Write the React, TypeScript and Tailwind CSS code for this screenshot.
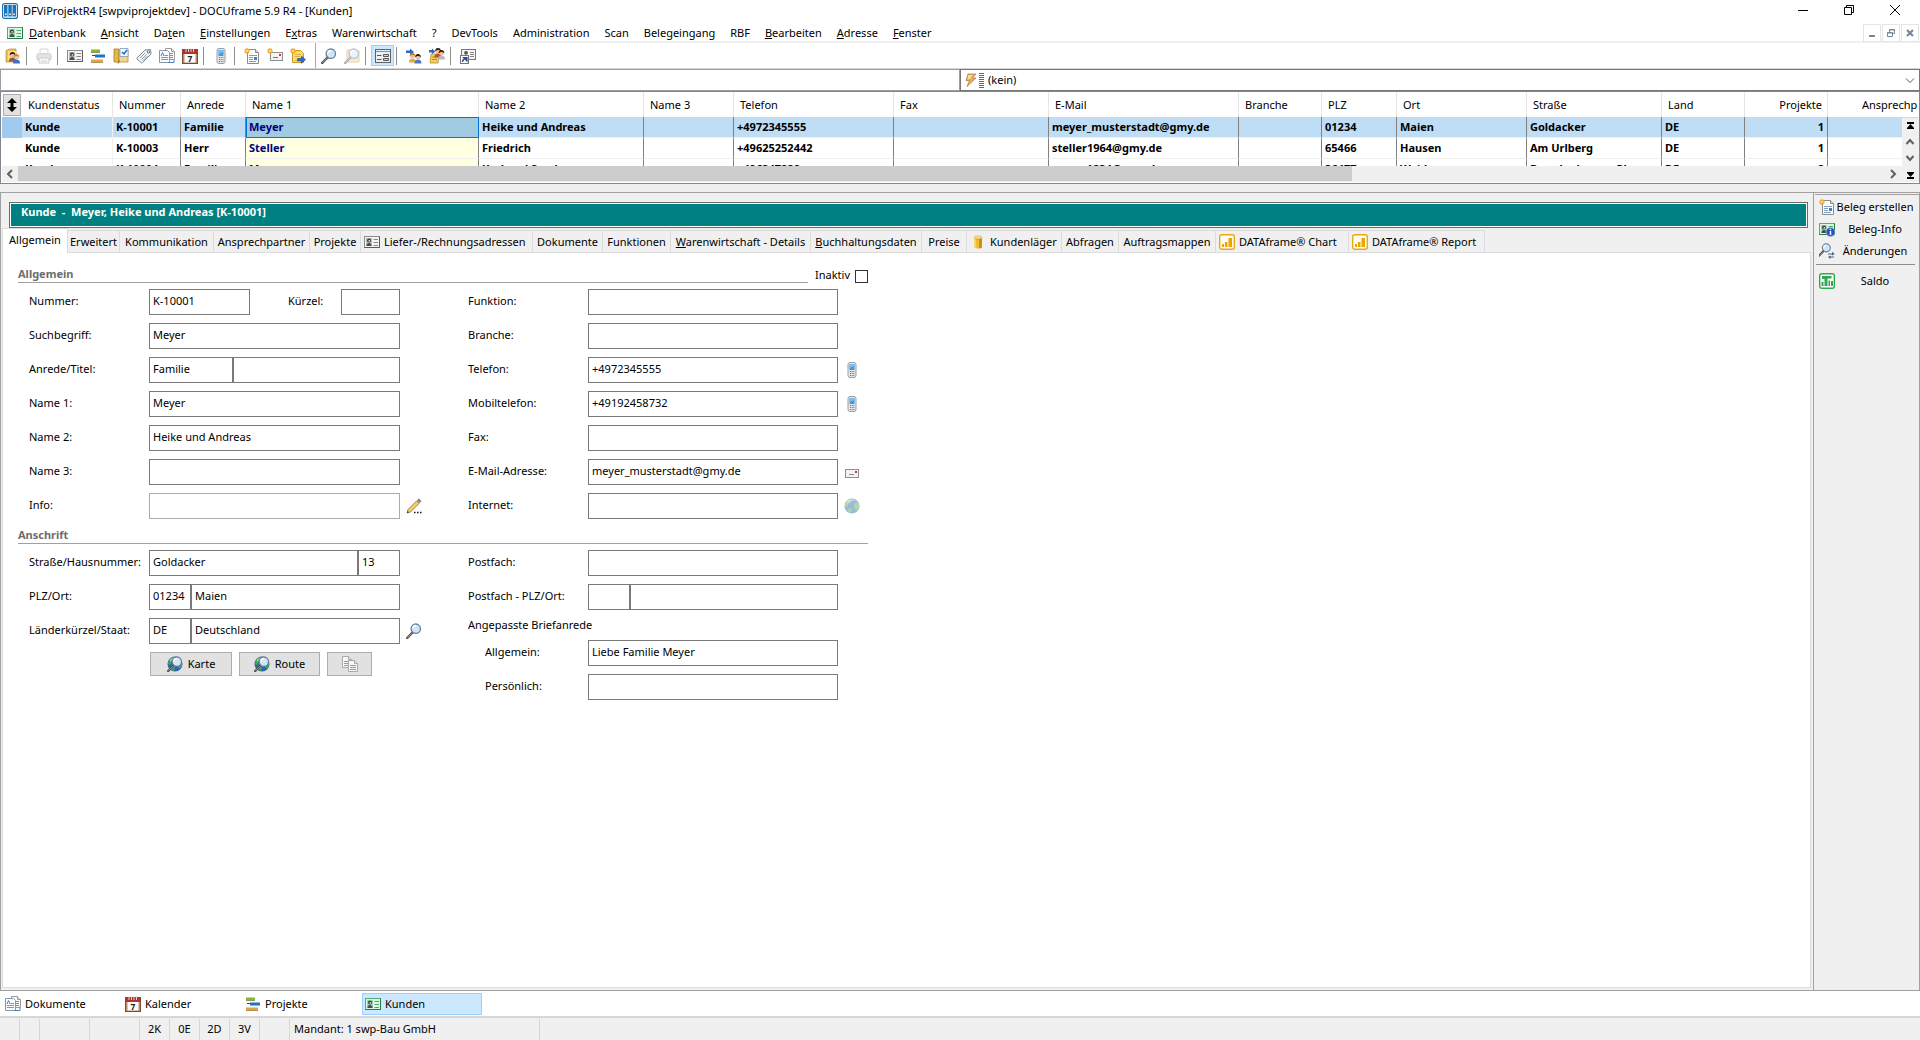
import React from 'react';

const Person = ({ x, y, hair, body }: { x: number; y: number; hair: string; body: string }) => (
  <g transform={`translate(${x} ${y})`}>
    <path d="M0 9.5C0 6.5 1.5 5.5 3.5 5.5S7 6.5 7 9.5z" fill={body} />
    <circle cx="3.5" cy="3.2" r="2.4" fill="#f0bf94" />
    <path d="M.8 3.6C.3 1 2-.2 3.8 0c2 .2 2.9 1.7 2.4 3.6C5.5 2.4 4.5 2 3.5 2S1.3 2.5.8 3.6z" fill={hair} />
  </g>
);

const Star = () => (
  <g stroke="#f5a623" strokeWidth="1.2">
    <path d="M3 0v6M0 3h6M1 1l4 4M5 1L1 5" />
    <circle cx="3" cy="3" r="1" fill="#ffe9a0" stroke="none" />
  </g>
);

const Card = ({ green }: { green?: boolean }) => (
  <>
    <rect x=".5" y="2.5" width="15" height="11" fill={green ? '#dff5e6' : '#f4f4f4'} stroke={green ? '#4fae73' : '#8c8c8c'} />
    <path d="M.5 13.5h15v-11" fill="none" stroke={green ? '#1f7c46' : '#5a5a5a'} />
    <rect x="2" y="4" width="6" height="8" fill={green ? '#9ad7b0' : '#bdbdbd'} />
    <circle cx="5" cy="6.5" r="2" fill="#3a3a3a" />
    <circle cx="5.3" cy="6.8" r=".9" fill="#e8e8e8" />
    <path d="M2.5 12c0-2 1-3 2.500-3s2.500 1 2.500 3z" fill="#4a4a4a" />
    <path d="M9.500 5.500h4.500M9.500 8.500h4.500M9.500 11.500h4.500" stroke={green ? '#49a96d' : '#8a8a8a'} />
  </>
);

const Lens = () => (
  <>
    <path d="M6.5 9.5L1.2 15" stroke="#4c4c4c" strokeWidth="2.4" strokeLinecap="round" />
    <path d="M6 10.2L1.5 14.7" stroke="#b5b5b5" strokeWidth=".8" />
    <circle cx="9.8" cy="5.7" r="4.7" fill="#cfe6fa" stroke="#6d7f93" strokeWidth="1.3" />
    <path d="M7 5.5c0-2 1.5-3 3-3" fill="none" stroke="#fff" strokeWidth="1.4" />
  </>
);

const Globe = () => (
  <>
    <circle cx="8" cy="8" r="7.5" fill="#2f62b5" />
    <path d="M2 4c2-3 5-3 6-2.500L7 4 4.500 6 3 9 1 8zM10 6l3-2 2.200 3-.7 4-2 1.500L10 10zM5 10l3 1-1 4c-2-.5-3-2-3-3z" fill="#3fae49" />
    <path d="M3 3.500C5 1 9 .8 12 2.500 9 2 5 3 3 6z" fill="#b7dcf7" opacity=".7" />
  </>
);

const Page = ({ x, y }: { x: number; y: number }) => (
  <g transform={`translate(${x} ${y})`}>
    <path d="M.5.5h6l3 3v8h-9z" fill="#fdfdfd" stroke="#9a9a9a" />
    <path d="M6.5.5v3h3" fill="#e5e5e5" stroke="#9a9a9a" />
    <path d="M2 5.5h6M2 7.5h6M2 9.5h6" stroke="#5b93c9" />
  </g>
);

const Bars = () => (
  <>
    <rect x=".7" y=".7" width="14.6" height="14.6" rx="2" fill="#fffdf5" stroke="#e8ab0c" strokeWidth="1.4" />
    <path d="M3 13h2V10H3zM6 13h2.500V8H6zM9.500 13H13V4H9.500z" fill="#e8a800" />
  </>
);

const ICONS: Record<string, React.ReactNode> = {
  app: (
    <>
      <rect x=".6" y=".6" width="14.8" height="14.8" rx="2" fill="#fff" stroke="#1c6fae" strokeWidth="1.2" />
      <path d="M2 2h3.500v11.500H2zM6.300 2h3.500v11.500H6.300zM10.500 2H14v11.500h-3.500z" fill="#1c74b8" />
      <path d="M3 10.500h1.500V12H3zM7.300 10.500h1.500V12H7.300zM11.500 10.500H13V12h-1.500z" fill="#fff" />
    </>
  ),
  card: <Card />,
  cardGreen: <Card green />,
  folderUser: (
    <>
      <path d="M1 2.500L5 1h6v11l-3 2H1z" fill="#eebf52" stroke="#b88a28" strokeWidth=".7" />
      <path d="M3 3h8v9H3z" fill="#f7dc8c" />
      <Person x={4} y={4} hair="#2c1d14" body="#8c5a3c" />
      <Person x={8} y={6} hair="#c98a3a" body="#3a6fd0" />
    </>
  ),
  printer: (
    <g opacity=".55">
      <path d="M4 1h8v5H4z" fill="#fafafa" stroke="#b5b5b5" />
      <rect x="1" y="6" width="14" height="6" rx="1" fill="#cfcfcf" stroke="#a5a5a5" />
      <path d="M3 10h10v5H3z" fill="#f2f2f2" stroke="#a5a5a5" />
      <path d="M5 13h6" stroke="#b5b5b5" />
    </g>
  ),
  gantt: (
    <>
      <path d="M1 1.500h9v3H1z" fill="#8db52c" />
      <path d="M5 6.500h10v3H5z" fill="#1d74c4" />
      <path d="M2 7.500h3" stroke="#444" />
      <path d="M1 11.500h12v3H1z" fill="#e6a33c" />
      <path d="M1 4.500h9M1 14.500h12" stroke="#6a6a3a" strokeWidth=".6" />
    </>
  ),
  planner: (
    <>
      <path d="M1 1h5v13H1z" fill="#e7b64b" stroke="#a97c22" strokeWidth=".8" />
      <path d="M6 2h9v12H6z" fill="#f3d68b" stroke="#b08a35" strokeWidth=".8" />
      <path d="M7 .5h8v8H7z" fill="#f4f9ff" stroke="#7a9cc4" strokeWidth=".8" />
      <path d="M9 4l2 2 3-4" fill="none" stroke="#1b62b8" strokeWidth="1.3" />
      <path d="M5 15.500l1.500-3" stroke="#8a6a2a" />
    </>
  ),
  tag: (
    <>
      <path d="M1 10L9 2l5.500-.5L15 6l-8.500 8.500c-.5.5-1 .5-1.500 0L1 11z" fill="#f3f5f7" stroke="#7d8790" />
      <circle cx="12.500" cy="4" r="1.2" fill="#fff" stroke="#66717c" />
      <path d="M4 10l5-5M5.500 11.500l5-5M7 12.500l4.500-4.500" stroke="#8fa0b3" />
    </>
  ),
  docs: (
    <>
      <Page x={6} y={0} />
      <path d="M.5 2.500h8l2 2v10H.5z" fill="#fafcff" stroke="#8d96a3" />
      <path d="M2 9.500h7M2 11.500h7M5.500 7.500H9" stroke="#6f9bd1" />
      <path d="M2 8l1.500-3.500L5 8M9 14.500h6v-3" fill="none" stroke="#4d7fc0" />
    </>
  ),
  calendar: (
    <>
      <rect x=".5" y="1.500" width="15" height="14" fill="#b98c6a" stroke="#7d4a32" />
      <path d="M1 2h14v4H1z" fill="#b5322c" />
      <path d="M4 0v4M6.500 0v4M9 0v4M11.500 0v4" stroke="#e3e3e3" strokeWidth=".9" />
      <path d="M2.500 6h11v8.500h-11z" fill="#fff" />
      <text x="8" y="13.500" textAnchor="middle" fontSize="8.5" fontWeight="700" fill="#222">7</text>
    </>
  ),
  phone: (
    <>
      <rect x="4" y=".5" width="8" height="15" rx="2" fill="#e4e6e8" stroke="#9a9fa5" />
      <rect x="5.500" y="2" width="5" height="6" fill="#3f9be0" />
      <path d="M5.500 2h5v2l-5 2z" fill="#79bef2" />
      <path d="M6 9.500h4.500M6 11.500h4.500M6 13.500h4.500" stroke="#6c7278" strokeDasharray="1 .7" />
    </>
  ),
  newDoc: (
    <>
      <path d="M3.500 1.500h8l3 3v11h-11z" fill="#fdfdfd" stroke="#8a8a8a" />
      <path d="M11.500 1.500v3h3" fill="#ddd" stroke="#8a8a8a" />
      <path d="M5 7.500h8M5 9.500h4M5 11.500h4M5 13.500h7" stroke="#7c9fc4" />
      <rect x="10" y="9" width="3" height="3" fill="#3d80c4" />
      <Star />
    </>
  ),
  newMail: (
    <>
      <rect x="3.500" y="4.500" width="12" height="8" fill="#f4f4f4" stroke="#8e8e8e" />
      <rect x="12" y="6" width="2" height="2" fill="#d8322c" />
      <path d="M6 9.500h5" stroke="#777" />
      <Star />
    </>
  ),
  newNote: (
    <>
      <path d="M2.500 2.500h8l3 3v9h-11z" fill="#f8dd6c" stroke="#c79d24" />
      <path d="M5 6.500h6M5 8.500h5M5 12.500h4" stroke="#d8b544" />
      <path d="M7.500 10.500h4V8l4 3.700-4 3.500V13h-4z" fill="#3468cf" stroke="#1d479f" strokeWidth=".6" />
      <Star />
    </>
  ),
  lens: <Lens />,
  lensFolder: (
    <g opacity=".45">
      <path d="M3 2h5l1 1h6v11H3z" fill="#f2d48e" stroke="#c9a557" />
      <Lens />
    </g>
  ),
  form: (
    <>
      <rect x=".5" y="1.500" width="15" height="13" fill="#eceff2" stroke="#5f6468" />
      <path d="M1 3.500h14" stroke="#8b9095" />
      <path d="M2 7.500h4.500M2 11.500h4.500" stroke="#555" strokeWidth="1.2" />
      <path d="M8.500 6.500h5v2h-5zM8.500 10.500h5v2h-5z" fill="#f7d773" stroke="#55595c" />
    </>
  ),
  arrowUsers: (
    <>
      <path d="M0 2.500h4V.5l4 3.500-4 3V5H0z" fill="#2f66c8" />
      <Person x={3} y={5} hair="#b98232" body="#e2a93f" />
      <Person x={8.5} y={6} hair="#2b1c12" body="#4a79c9" />
    </>
  ),
  arrowDocUsers: (
    <>
      <path d="M2 6h8l-1 9H1z" fill="#f2cf62" stroke="#b58e26" strokeWidth=".8" />
      <path d="M3 9h5M3 11.500h5" stroke="#a87f22" strokeWidth=".8" />
      <path d="M0 2h3V.5l3.500 3L3 6V4.500H0z" fill="#2f66c8" />
      <Person x={5.5} y={0} hair="#3b2413" body="#b5542e" />
      <Person x={9} y={2} hair="#2b1c12" body="#b8b8c6" />
    </>
  ),
  shortcut: (
    <>
      <rect x="1.500" y="1.500" width="14" height="10" fill="#f4f4f4" stroke="#777" />
      <circle cx="6" cy="4.800" r="1.9" fill="#555" />
      <path d="M10 4.500h4M10 6.500h4M10 8.500h4" stroke="#888" />
      <rect x=".5" y="7.500" width="8" height="8" fill="#fff" stroke="#777" />
      <path d="M2.500 14c0-2 .8-3 2.500-3M3.500 9.500h3.500V13z" fill="#1c4f9e" stroke="#1c4f9e" strokeWidth="1.2" />
    </>
  ),
  bolt: (
    <>
      <path d="M5 2h8l-3.500 4H13L4 14.500l2.500-6H3z" fill="#e9b06a" stroke="#a8733f" strokeWidth=".7" />
      <path d="M5.500 3h4l-3 4h-2z" fill="#ffe08a" />
    </>
  ),
  pencil: (
    <>
      <path d="M1 15l1-3.500L10.500 3 13 5.500 4.500 14z" fill="#f3cf6a" stroke="#8f6d2c" strokeWidth=".8" />
      <path d="M10.500 3l1.500-1.500 2.500 2.500L13 5.500z" fill="#7da391" />
      <path d="M12 1.500c1-1.200 3.500 1 2.500 2.500z" fill="#d4545a" stroke="#a3393f" strokeWidth=".5" />
      <path d="M1 15l.7-2 1.300 1.300z" fill="#222" />
      <path d="M8 14.500h1.500M11 14.500h1.500M14 14.500h1.500" stroke="#111" strokeWidth="1.5" />
    </>
  ),
  mail: (
    <>
      <rect x="1.500" y="5.500" width="13" height="8" fill="#f2f2f2" stroke="#8f8f8f" />
      <rect x="11" y="7" width="2" height="2" fill="#d8322c" />
      <path d="M5 10.500h5" stroke="#888" />
    </>
  ),
  globe: <g opacity=".45"><Globe /></g>,
  globeLens: (
    <>
      <Globe />
      <Lens />
    </>
  ),
  copy: (
    <g opacity=".8">
      <Page x={0} y={0} />
      <Page x={6} y={4} />
    </g>
  ),
  cylinder: (
    <>
      <path d="M4 3.500v9c0 2.500 8 2.500 8 0v-9z" fill="#f0bb2c" />
      <path d="M9 3v11.500c2 0 3-.8 3-2V3z" fill="#c98e12" />
      <path d="M5 4v9.500" stroke="#fff0b5" />
      <ellipse cx="8" cy="3.500" rx="4" ry="1.5" fill="#fbe08a" stroke="#c08f20" strokeWidth=".5" />
    </>
  ),
  bars: <Bars />,
  cardInfo: (
    <>
      <Card green />
      <circle cx="11.500" cy="11" r="4.5" fill="#2855b8" stroke="#b8c6e8" strokeWidth=".6" />
      <path d="M11.500 10v4M11.500 7.800v1.200" stroke="#fff" strokeWidth="1.5" />
    </>
  ),
  lensSync: (
    <>
      <g transform="translate(-1 0) scale(.85)"><Lens /></g>
      <path d="M9 11h5M15 14h-5" stroke="#45658a" strokeWidth="1.2" />
      <path d="M13 8.800l2.800 2.200-2.800 1.500zM11.500 12.500L9 14l2.500 2z" fill="#45658a" />
    </>
  ),
  saldo: (
    <>
      <rect x=".7" y=".7" width="14.6" height="14.6" rx="2" fill="#fff" stroke="#2fa84f" strokeWidth="1.4" />
      <path d="M2.500 13v-4h2v4zM5.500 13V6H3V3h9.500v2.500H8.500V13zM9.500 13V7.500h1.500V13zM12 13V8h2v5z" fill="#2fa84f" />
    </>
  ),
};

const Icon = ({ name }: { name: string }) => (
  <svg viewBox="0 0 16 16" className="w-4 h-4 shrink-0" aria-hidden="true">
    {ICONS[name]}
  </svg>
);

const menu = [
  ['D', 'atenbank'],
  ['A', 'nsicht'],
  ['', 'Daten', 't'],
  ['E', 'instellungen'],
  ['', 'Extras', 'x'],
  ['', 'Warenwirtschaft'],
  ['', '?'],
  ['', 'DevTools'],
  ['', 'Administration'],
  ['', 'Scan'],
  ['', 'Belegeingang'],
  ['', 'RBF'],
  ['B', 'earbeiten'],
  ['A', 'dresse'],
  ['F', 'enster'],
];

const toolbar = [
  'folderUser', '|', 'printer', '|', 'card', 'gantt', 'planner', 'tag', 'docs', 'calendar', '|', 'phone', '|',
  'newDoc', 'newMail', 'newNote', '||', 'lens', 'lensFolder', '|', 'form', '|', 'arrowUsers', 'arrowDocUsers', '|', 'shortcut',
];

const columns = [
  { title: 'Kundenstatus', width: 'w-[91px]' },
  { title: 'Nummer', width: 'w-[68px]' },
  { title: 'Anrede', width: 'w-[65px]' },
  { title: 'Name 1', width: 'w-[233px]' },
  { title: 'Name 2', width: 'w-[165px]' },
  { title: 'Name 3', width: 'w-[90px]' },
  { title: 'Telefon', width: 'w-[160px]' },
  { title: 'Fax', width: 'w-[155px]' },
  { title: 'E-Mail', width: 'w-[190px]' },
  { title: 'Branche', width: 'w-[83px]' },
  { title: 'PLZ', width: 'w-[75px]' },
  { title: 'Ort', width: 'w-[130px]' },
  { title: 'Straße', width: 'w-[135px]' },
  { title: 'Land', width: 'w-[83px]' },
  { title: 'Projekte', width: 'w-[83px]' },
];

const customers = [
  ['Kunde', 'K-10001', 'Familie', 'Meyer', 'Heike und Andreas', '', '+4972345555', '', 'meyer_musterstadt@gmy.de', '', '01234', 'Maien', 'Goldacker', 'DE', '1'],
  ['Kunde', 'K-10003', 'Herr', 'Steller', 'Friedrich', '', '+49625252442', '', 'steller1964@gmy.de', '', '65466', 'Hausen', 'Am Urlberg', 'DE', '1'],
  ['Kunde', 'K-10004', 'Familie', 'Moser', 'Karl und Sandra', '', '+496347828', '', 'moser1234@gmy.de', '', '36477', 'Weiden', 'Brandenburger Pl.', 'DE', '2'],
];

const tabs = [
  { label: 'Erweitert', width: 'w-[52px]' },
  { label: 'Kommunikation', width: 'w-[94px]' },
  { label: 'Ansprechpartner', width: 'w-[96px]' },
  { label: 'Projekte', width: 'w-[51px]' },
  { label: 'Liefer-/Rechnungsadressen', width: 'w-[172px]', icon: 'card' },
  { label: 'Dokumente', width: 'w-[70px]' },
  { label: 'Funktionen', width: 'w-[68px]' },
  { label: 'arenwirtschaft - Details', key: 'W', width: 'w-[140px]' },
  { label: 'uchhaltungsdaten', key: 'B', width: 'w-[111px]' },
  { label: 'Preise', width: 'w-[45px]' },
  { label: 'Kundenläger', width: 'w-[95px]', icon: 'cylinder' },
  { label: 'Abfragen', width: 'w-[57px]' },
  { label: 'Auftragsmappen', width: 'w-[97px]' },
  { label: 'DATAframe® Chart', width: 'w-[133px]', icon: 'bars' },
  { label: 'DATAframe® Report', width: 'w-[136px]', icon: 'bars' },
];

const windows = [
  { label: 'Dokumente', icon: 'docs' },
  { label: 'Kalender', icon: 'calendar' },
  { label: 'Projekte', icon: 'gantt' },
  { label: 'Kunden', icon: 'cardGreen', active: true },
];

const status = [
  { text: '', width: 'w-5' },
  { text: '', width: 'w-5' },
  { text: '', width: 'w-[50px]' },
  { text: '', width: 'w-[50px]' },
  { text: '2K', width: 'w-[30px] text-center' },
  { text: '0E', width: 'w-[30px] text-center' },
  { text: '2D', width: 'w-[30px] text-center' },
  { text: '3V', width: 'w-[30px] text-center' },
  { text: '', width: 'w-[30px]' },
  { text: 'Mandant: 1 swp-Bau GmbH', width: 'w-[250px] pl-1' },
];

type Part = { value?: string; width: string; name?: string };

const Row = ({ label, id, parts, icon, iconLabel, light, indent, children }: {
  label: string;
  id: string;
  parts: Part[];
  icon?: string;
  iconLabel?: string;
  light?: boolean;
  indent?: boolean;
  children?: React.ReactNode;
}) => (
  <div className="flex items-center h-[26px]">
    <label htmlFor={`${id}-0`} className={`w-[120px] shrink-0 pb-[3px] whitespace-nowrap ${indent ? 'pl-[17px]' : ''}`}>
      {label}
    </label>
    {parts.map((p, i) => (
      <input
        key={i}
        id={`${id}-${i}`}
        aria-label={p.name}
        defaultValue={p.value}
        className={`h-[26px] border bg-white pl-[3px] pb-[3px] outline-none ${light ? 'border-[#ababab]' : 'border-[#7a7a7a]'} ${p.width}`}
      />
    ))}
    {children}
    {icon && (
      <button type="button" className="ml-[6px]" aria-label={iconLabel}>
        <Icon name={icon} />
      </button>
    )}
  </div>
);

const Chevron = ({ d }: { d: string }) => (
  <svg viewBox="0 0 16 16" className="w-4 h-4" aria-hidden="true">
    <path d={d} fill="none" stroke="#606060" strokeWidth="2" />
  </svg>
);

const TitleBar = () => (
  <header className="flex items-start h-6 px-[2px]">
    <div className="flex items-center gap-[5px] h-6 pb-[2px]">
      <Icon name="app" />
      <h1>DFViProjektR4 [swpviprojektdev] - DOCUframe 5.9 R4 - [Kunden]</h1>
    </div>
    <div className="flex ml-auto text-black">
      <button className="flex justify-center w-[46px] pt-[2px]" aria-label="Minimieren">
        <svg viewBox="0 0 16 16" className="w-4 h-4"><path d="M3 8.500h10" stroke="currentColor" /></svg>
      </button>
      <button className="flex justify-center w-[46px] pt-[2px]" aria-label="Wiederherstellen">
        <svg viewBox="0 0 16 16" className="w-4 h-4"><path d="M3.500 5.500h7v7h-7zM5.500 5.500v-2h7v7h-2" fill="none" stroke="currentColor" /></svg>
      </button>
      <button className="flex justify-center w-[46px] pt-[2px]" aria-label="Schließen">
        <svg viewBox="0 0 16 16" className="w-4 h-4"><path d="M3 3l10 10M13 3L3 13" stroke="currentColor" /></svg>
      </button>
    </div>
  </header>
);

const MenuBar = () => (
  <nav className="flex items-center h-[19px] border-b-2 border-[#f0f0f0] pl-[7px] pr-px">
    <Icon name="cardGreen" />
    <div className="flex gap-[15px] ml-[6px]">
      {menu.map(([key, text, inner]) => (
        <button key={key + text}>
          {key && <u>{key}</u>}
          {inner ? (
            <>
              {text.split(inner)[0]}
              <u>{inner}</u>
              {text.split(inner)[1]}
            </>
          ) : (
            text
          )}
        </button>
      ))}
    </div>
    <div className="flex gap-px ml-auto text-[#78879a]">
      <button className="w-[18px] h-[18px] border border-[#e5e5e5]" aria-label="Fenster minimieren">
        <svg viewBox="0 0 16 16"><path d="M5 11h6" stroke="currentColor" strokeWidth="2" /></svg>
      </button>
      <button className="w-[18px] h-[18px] border border-[#e5e5e5]" aria-label="Fenster wiederherstellen">
        <svg viewBox="0 0 16 16"><path d="M4.500 7.500h5v4h-5zM4 8h6M6.500 7V4.500h5v4H10M6 5h6" fill="none" stroke="currentColor" /></svg>
      </button>
      <button className="w-[18px] h-[18px] border border-[#e5e5e5]" aria-label="Fenster schließen">
        <svg viewBox="0 0 16 16"><path d="M5 5l6 6M11 5l-6 6" stroke="currentColor" strokeWidth="2.2" /></svg>
      </button>
    </div>
  </nav>
);

const Toolbar = () => (
  <div className="flex items-center h-[26px] border-b border-[#d5d5d5] pl-px">
    {toolbar.map((name, i) => {
      if (name === '|') return <span key={i} className="w-2 h-[18px] pl-[2px]"><span className="block w-px h-full bg-[#8c8c8c]" /></span>;
      if (name === '||') return <span key={i} className="w-2 h-full pl-[6px]"><span className="block w-px h-full bg-[#a8a8a8]" /></span>;
      return (
        <button
          key={i}
          aria-label={name}
          className={`flex items-center justify-center w-[23px] h-[21px] ${name === 'form' ? 'bg-[#cce8ff] border border-[#99d1ff]' : ''}`}
        >
          <Icon name={name} />
        </button>
      );
    })}
  </div>
);

const SearchRow = () => (
  <div className="flex h-[22px]">
    <input aria-label="Suche" className="w-1/2 border border-[#9a9da3] outline-none px-1" />
    <div className="relative flex w-1/2 items-center border border-[#777] pl-[2px]">
      <Icon name="bolt" />
      <svg viewBox="0 0 5 16" className="w-[5px] h-4" aria-hidden="true">
        <path d="M0 1.500h5M0 3.500h5M0 5.500h5M0 7.500h5M0 9.500h5M0 11.500h5M0 13.500h5M0 15.500h5" stroke="#666" />
      </svg>
      <select aria-label="Filter" className="flex-1 h-full appearance-none bg-transparent pl-1 outline-none">
        <option>(kein)</option>
      </select>
      <span className="absolute right-px pointer-events-none">
        <svg viewBox="0 0 16 16" className="w-4 h-4" aria-hidden="true"><path d="M4 6.500l4 4 4-4" fill="none" stroke="#555" /></svg>
      </span>
    </div>
  </div>
);

const cellClass = (row: number, col: number) => {
  if (col === 3) {
    return row === 0
      ? 'bg-[#a0cbe0] text-[#000080] outline outline-1 -outline-offset-1 outline-[#0078d7] border-[#0078d7]'
      : 'bg-[#ffffe1] text-[#000080] border-r-[#808080]';
  }
  if (col === 0) return 'border-r-[#f0f0f0]';
  return col === 14 ? 'border-r-[#808080] text-right' : 'border-r-[#808080]';
};

const CustomerTable = () => (
  <section className="relative border border-[#828790] px-px pb-px">
    <div className="h-[74px] overflow-hidden">
      <table className="w-full table-fixed border-separate border-spacing-0 whitespace-nowrap">
        <thead>
          <tr className="h-[25px]">
            <th className="w-5 p-0">
              <button className="flex items-center justify-center w-[18px] h-[22px] ml-px bg-[#e1e1e1] border border-[#adadad]" aria-label="Sortieren">
                <svg viewBox="0 0 12 14" className="w-3 h-[14px]"><path d="M6 0l5 5H7.500v4H11l-5 5-5-5h3.500V5H1z" fill="#000" /></svg>
              </button>
            </th>
            {columns.map((c, i) => (
              <th
                key={c.title}
                className={`p-0 pl-[6px] font-normal border-r border-[#e5e5e5] ${i === 14 ? 'text-right pr-[5px]' : 'text-left'} ${c.width}`}
              >
                {c.title}
              </th>
            ))}
            <th className="p-0 pl-[34px] font-normal text-left overflow-hidden">Ansprechp</th>
          </tr>
        </thead>
        <tbody className="font-bold">
          {customers.map((row, r) => (
            <tr key={row[1]} className={`h-[21px] ${r === 0 ? 'bg-[#bfddf5]' : ''}`}>
              <td className={`p-0 ${r === 0 ? 'bg-[#9fcbee]' : ''}`} />
              {row.map((value, c) => (
                <td key={c} className={`p-0 px-[3px] border-r border-b border-b-[#f0f0f0] ${cellClass(r, c)}`}>
                  {value}
                </td>
              ))}
              <td className="p-0 border-b border-[#f0f0f0]" />
            </tr>
          ))}
        </tbody>
      </table>
    </div>
    <div className="flex items-center h-4 bg-[#f0f0f0]">
      <button aria-label="Nach links"><Chevron d="M10 4L6 8l4 4" /></button>
      <div className="flex-1 h-[15px] self-start">
        <div className="w-5/7 h-full bg-[#cdcdcd]" />
      </div>
      <button className="mr-[17px]" aria-label="Nach rechts"><Chevron d="M6 4l4 4-4 4" /></button>
    </div>
    <div className="absolute right-0 bottom-px flex flex-col w-[17px] bg-[#f0f0f0]">
      <button aria-label="Zum Anfang">
        <svg viewBox="0 0 16 16" className="w-4 h-4"><path d="M5 4h7v2H5zM8.500 6L12 10v1H5v-1z" fill="#000" /></svg>
      </button>
      <button aria-label="Nach oben"><Chevron d="M4.500 10L8 6l3.500 4" /></button>
      <button aria-label="Nach unten"><Chevron d="M4.500 6L8 10l3.500-4" /></button>
      <button aria-label="Zum Ende">
        <svg viewBox="0 0 16 16" className="w-4 h-4"><path d="M5 11h7v2H5zM8.500 11L12 7V6H5v1z" fill="#000" /></svg>
      </button>
    </div>
  </section>
);

const Tabs = () => (
  <div role="tablist" className="flex items-end h-6 pl-px whitespace-nowrap">
    <button role="tab" aria-selected="true" className="relative z-10 w-[66px] h-[25px] -mb-px pb-[2px] bg-white border border-b-0 border-[#dcdcdc]">
      Allgemein
    </button>
    {tabs.map((t) => (
      <button
        key={t.label}
        role="tab"
        aria-selected="false"
        className={`flex items-center gap-1 h-[22px] border-t border-r border-[#dcdcdc] ${t.icon ? 'pl-[3px]' : 'justify-center'} ${t.width}`}
      >
        {t.icon && <Icon name={t.icon} />}
        <span>{t.key && <u>{t.key}</u>}{t.label}</span>
      </button>
    ))}
  </div>
);

const General = () => (
  <form className="w-[850px] ml-[15px] pt-[14px]">
    <div className="flex items-end gap-[7px] h-4">
      <h2 className="flex-1 h-4 leading-[14px] font-bold text-[#6d6d6d] border-b border-[#a0a0a0]">Allgemein</h2>
      <label className="flex items-end gap-[5px]">
        Inaktiv
        <input type="checkbox" className="appearance-none w-[13px] h-[13px] border border-[#333] bg-white" />
      </label>
    </div>
    <div className="grid grid-cols-[439px_1fr] pl-[11px] mt-[6px]">
      <div className="flex flex-col gap-2">
        <Row label="Nummer:" id="nummer" parts={[{ value: 'K-10001', width: 'w-[101px]' }]}>
          <label htmlFor="kuerzel" className="w-[53px] ml-[38px] pb-[3px]">Kürzel:</label>
          <input id="kuerzel" className="w-[59px] h-[26px] border border-[#7a7a7a] pl-[3px] pb-[3px]" />
        </Row>
        <Row label="Suchbegriff:" id="such" parts={[{ value: 'Meyer', width: 'w-[251px]' }]} />
        <Row label="Anrede/Titel:" id="anrede" parts={[{ value: 'Familie', width: 'w-[84px]' }, { width: 'w-[167px]', name: 'Titel' }]} />
        <Row label="Name 1:" id="name1" parts={[{ value: 'Meyer', width: 'w-[251px]' }]} />
        <Row label="Name 2:" id="name2" parts={[{ value: 'Heike und Andreas', width: 'w-[251px]' }]} />
        <Row label="Name 3:" id="name3" parts={[{ width: 'w-[251px]' }]} />
        <Row label="Info:" id="info" light parts={[{ width: 'w-[251px]' }]} icon="pencil" iconLabel="Info bearbeiten" />
      </div>
      <div className="flex flex-col gap-2">
        <Row label="Funktion:" id="funktion" parts={[{ width: 'w-[250px]' }]} />
        <Row label="Branche:" id="branche" parts={[{ width: 'w-[250px]' }]} />
        <Row label="Telefon:" id="telefon" parts={[{ value: '+4972345555', width: 'w-[250px]' }]} icon="phone" iconLabel="Anrufen" />
        <Row label="Mobiltelefon:" id="mobil" parts={[{ value: '+49192458732', width: 'w-[250px]' }]} icon="phone" iconLabel="Mobil anrufen" />
        <Row label="Fax:" id="fax" parts={[{ width: 'w-[250px]' }]} />
        <Row label="E-Mail-Adresse:" id="email" parts={[{ value: 'meyer_musterstadt@gmy.de', width: 'w-[250px]' }]} icon="mail" iconLabel="E-Mail schreiben" />
        <Row label="Internet:" id="internet" parts={[{ width: 'w-[250px]' }]} icon="globe" iconLabel="Webseite öffnen" />
      </div>
    </div>

    <h2 className="h-4 mt-[9px] leading-[14px] font-bold text-[#6d6d6d] border-b border-[#a0a0a0]">Anschrift</h2>
    <div className="grid grid-cols-[439px_1fr] pl-[11px] mt-[6px]">
      <div className="flex flex-col gap-2">
        <Row label="Straße/Hausnummer:" id="strasse" parts={[{ value: 'Goldacker', width: 'w-[209px]' }, { value: '13', width: 'w-[42px]', name: 'Hausnummer' }]} />
        <Row label="PLZ/Ort:" id="plz" parts={[{ value: '01234', width: 'w-[42px]' }, { value: 'Maien', width: 'w-[209px]', name: 'Ort' }]} />
        <Row
          label="Länderkürzel/Staat:"
          id="land"
          parts={[{ value: 'DE', width: 'w-[42px]' }, { value: 'Deutschland', width: 'w-[209px]', name: 'Staat' }]}
          icon="lens"
          iconLabel="Staat suchen"
        />
        <div className="flex gap-[7px] pl-[121px]">
          <button type="button" className="flex items-center justify-center gap-[5px] w-[82px] h-6 bg-[#e1e1e1] border border-[#adadad]">
            <Icon name="globeLens" />
            Karte
          </button>
          <button type="button" className="flex items-center justify-center gap-[5px] w-[81px] h-6 bg-[#e1e1e1] border border-[#adadad]">
            <Icon name="globeLens" />
            Route
          </button>
          <button type="button" className="flex items-center justify-center w-[45px] h-6 bg-[#e1e1e1] border border-[#adadad]" aria-label="Kopieren">
            <Icon name="copy" />
          </button>
        </div>
      </div>
      <div className="flex flex-col gap-2">
        <Row label="Postfach:" id="postfach" parts={[{ width: 'w-[250px]' }]} />
        <Row label="Postfach - PLZ/Ort:" id="postfach-plz" parts={[{ width: 'w-[42px]' }, { width: 'w-[208px]', name: 'Postfach Ort' }]} />
        <h3 className="h-[14px] leading-[14px]">Angepasste Briefanrede</h3>
        <Row label="Allgemein:" id="anrede-allg" indent parts={[{ value: 'Liebe Familie Meyer', width: 'w-[250px]' }]} />
        <Row label="Persönlich:" id="anrede-pers" indent parts={[{ width: 'w-[250px]' }]} />
      </div>
    </div>
  </form>
);

const SideItem = ({ icon, label }: { icon: string; label: string }) => (
  <button className="flex items-center w-full h-[22px] pl-[3px]">
    <Icon name={icon} />
    <span className="flex-1 text-center whitespace-nowrap">{label}</span>
  </button>
);

const App = () => {
  return (
    <div className="flex flex-col min-h-screen bg-white font-['Noto_Sans','Open_Sans',sans-serif] text-[11px] leading-4 text-black">
      <TitleBar />
      <MenuBar />
      <Toolbar />
      <SearchRow />
      <CustomerTable />

      <main className="flex flex-1 bg-[#f0f0f0] border-t-8 border-[#f0f0f0]">
        <div className="flex flex-1 min-w-0 border border-[#a0a0a0]">
          <div className="flex flex-1 flex-col min-w-0 pt-[9px]">
            <div className="ml-2 mr-[5px] border border-[#696969] bg-white p-px">
              <h2 className="h-[22px] pl-[10px] leading-4 font-bold text-white bg-[#008080] whitespace-pre">
                Kunde  -  Meyer, Heike und Andreas [K-10001]
              </h2>
            </div>
            <Tabs />
            <div className="flex-1 ml-px mr-[2px] mb-[2px] bg-white border border-[#dcdcdc]">
              <General />
            </div>
          </div>
          <aside className="w-[106px] border-l border-[#a0a0a0] pl-px pt-px">
            <div className="h-full border-t border-[#a0a0a0] pl-px pr-1 pt-px">
              <SideItem icon="newDoc" label="Beleg erstellen" />
              <SideItem icon="cardInfo" label="Beleg-Info" />
              <SideItem icon="lensSync" label="Änderungen" />
              <hr className="mt-[2px] mb-[5px] border-[#8c8c8c]" />
              <SideItem icon="saldo" label="Saldo" />
            </div>
          </aside>
        </div>
      </main>

      <div className="flex items-center h-[25px] pl-[2px]">
        {windows.map((w) => (
          <button
            key={w.label}
            className={`flex items-center gap-1 w-[120px] h-[22px] pl-[2px] border ${w.active ? 'bg-[#cce8ff] border-[#99d1ff]' : 'border-transparent'}`}
          >
            <Icon name={w.icon} />
            {w.label}
          </button>
        ))}
      </div>
      <footer className="flex h-6 pt-px bg-[#f0f0f0] border-t-2 border-[#d7d7d7]">
        {status.map((s, i) => (
          <div key={i} className={`h-[21px] pt-[2px] border-r border-[#d7d7d7] ${s.width}`}>{s.text}</div>
        ))}
      </footer>
    </div>
  );
};

export default App;
